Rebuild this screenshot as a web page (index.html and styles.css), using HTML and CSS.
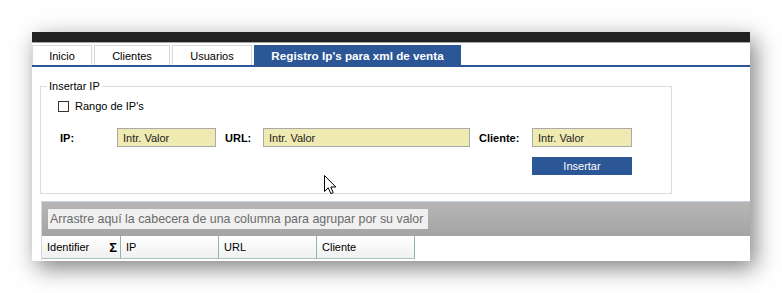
FILE: index.html
```html
<!DOCTYPE html>
<html lang="es">
  <head>
    <meta charset="UTF-8" />
    <meta name="viewport" content="width=device-width, initial-scale=1.0" />
    <title>Registro Ip's para xml de venta</title>
    <link rel="stylesheet" href="styles.css">
  </head>
  <body>
    <div class="window">
      <div class="titlebar"></div>
      <div class="tabs">
        <div class="tab tab-inicio">Inicio</div>
        <div class="tab tab-clientes">Clientes</div>
        <div class="tab tab-usuarios">Usuarios</div>
        <div class="tab tab-registro active">Registro Ip's para xml de venta</div>
      </div>
      <div class="content">
        <fieldset class="groupbox">
          <legend>Insertar IP</legend>
          <label class="check-row">
            <span class="checkbox"></span>
            <span>Rango de IP's</span>
          </label>
          <div class="field-row">
            <span class="field-label lbl-ip">IP:</span>
            <div class="field-input input-ip">Intr. Valor</div>
            <span class="field-label lbl-url">URL:</span>
            <div class="field-input input-url">Intr. Valor</div>
            <span class="field-label lbl-cliente">Cliente:</span>
            <div class="field-input input-cliente">Intr. Valor</div>
          </div>
          <div class="button-row">
            <button class="insert-button">Insertar</button>
          </div>
        </fieldset>

        <div class="grid">
          <div class="group-band">
            <div class="group-panel">Arrastre aquí la cabecera de una columna para agrupar por su valor</div>
          </div>
          <div class="header-row">
            <div class="col-header col-id">
              <span>Identifier</span>
              <span class="sigma">Σ</span>
            </div>
            <div class="col-header">IP</div>
            <div class="col-header">URL</div>
            <div class="col-header">Cliente</div>
          </div>
        </div>
      </div>

      <svg class="cursor" width="13" height="20" viewBox="0 0 13 20">
        <path d="M0.5 0.5 L0.5 16.5 L4.3 12.8 L6.8 18.6 L9.2 17.6 L6.8 12 L11.8 12 Z" fill="#fff" stroke="#000" stroke-width="1" stroke-linejoin="miter" />
      </svg>
    </div>
  </body>
</html>
```

FILE: styles.css
```css
* {
  margin: 0;
  padding: 0;
  box-sizing: border-box;
}
body {
  font-family: "Liberation Sans", Arial, sans-serif;
  font-size: 11px;
  color: #000;
  background: #fff;
  width: 782px;
  height: 293px;
  overflow: hidden;
  padding: 32px 0 0 32px;
}
.window {
  position: relative;
  width: 718px;
  height: 229px;
  overflow: hidden;
  background: #fff;
  box-shadow: 5px 7px 22px rgba(0, 0, 0, 0.5);
}
.titlebar {
  height: 11px;
  background: #212121;
  border-bottom: 1px solid #a6a6a6;
}
.tabs {
  display: flex;
  gap: 2px;
  padding-top: 2px;
  border-bottom: 2px solid #2b5797;
}
.tab {
  height: 20px;
  border: 1px solid #dadada;
  border-bottom: none;
  display: flex;
  align-items: center;
  justify-content: center;
  font-size: 11px;
  color: #000;
}
.tab-inicio {
  width: 60px;
}
.tab-clientes {
  width: 76px;
}
.tab-usuarios {
  width: 80px;
}
.tab-registro {
  width: 207px;
}
.tab.active {
  background: #2b5797;
  border-color: #2b5797;
  color: #fff;
  font-weight: bold;
  font-size: 11.7px;
}
.content {
  padding: 12px 0 0 8px;
}
.groupbox {
  width: 632px;
  border: 1px solid #dcdcdc;
  padding: 6px 0 18px 0;
  min-width: 0;
}
.groupbox legend {
  margin-left: 6px;
  padding: 0 2px;
  font-size: 11px;
  line-height: 14px;
  color: #000;
}
.check-row {
  display: flex;
  align-items: center;
  gap: 6px;
  padding-left: 17px;
  height: 14px;
}
.checkbox {
  width: 11px;
  height: 11px;
  border: 1px solid #333;
  background: #fff;
}
.field-row {
  display: flex;
  align-items: center;
  margin-top: 15px;
  padding-left: 19px;
}
.field-label {
  font-weight: bold;
  font-size: 11px;
}
.lbl-ip {
  width: 57px;
}
.lbl-url {
  width: 38px;
  margin-left: 9px;
}
.lbl-cliente {
  width: 53px;
  margin-left: 9px;
}
.field-input {
  height: 19px;
  background: #efe9b2;
  border: 1px solid #a9a9a9;
  padding-left: 5px;
  display: flex;
  align-items: center;
  color: #1c1c1c;
}
.input-ip {
  width: 99px;
}
.input-url {
  width: 207px;
}
.input-cliente {
  width: 100px;
}
.button-row {
  margin-top: 10px;
  padding-left: 491px;
}
.insert-button {
  width: 100px;
  height: 18px;
  border: none;
  background: #2b5797;
  color: #fff;
  font-family: "Liberation Sans", Arial, sans-serif;
  font-size: 11px;
}
.grid {
  margin: 7px 0 0 1px;
  border-top: 1px solid #c6d0da;
  border-left: 1px solid #d4d8dc;
}
.group-band {
  height: 34px;
  background: linear-gradient(#b6b6b6, #a4a4a4);
  padding: 7px 0 0 6px;
}
.group-panel {
  width: 380px;
  height: 20px;
  background: #f0f0f0;
  color: #6b6b6b;
  font-size: 12.4px;
  display: flex;
  align-items: center;
  padding-left: 2px;
}
.header-row {
  display: flex;
  height: 24px;
  background: #fff;
}
.col-header {
  width: 98px;
  height: 23px;
  display: flex;
  align-items: center;
  padding-left: 5px;
  background: linear-gradient(#ffffff, #f0f0f0);
  border-right: 1px solid #8fb4b4;
  border-bottom: 1px solid #a8c4c4;
  font-size: 11px;
}
.col-id {
  width: 79px;
  justify-content: space-between;
  padding-right: 3px;
}
.sigma {
  font-weight: bold;
  font-size: 13px;
}
.cursor {
  position: absolute;
  left: 292px;
  top: 143px;
}
```
